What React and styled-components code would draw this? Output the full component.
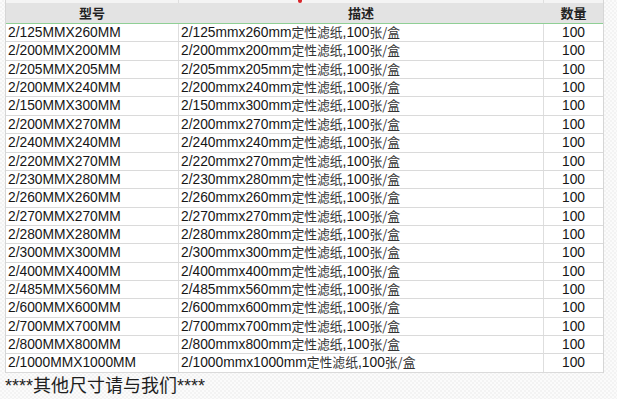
import React from 'react';
import styled, { createGlobalStyle } from 'styled-components';

const GlobalStyle = createGlobalStyle`
  html, body {
    margin: 0;
    padding: 0;
  }
  body {
    width: 617px;
    height: 399px;
    overflow: hidden;
    background-color: #ffffff;
    background-image: repeating-conic-gradient(#f3f3f3 0% 25%, #fbfbfb 0% 50%);
    background-size: 4px 4px;
    font-family: "Liberation Sans", Arial, "Noto Sans CJK SC", sans-serif;
    color: #1e1e1e;
  }
`;

const Page = styled.div`
  display: flex;
  flex-direction: column;
  width: 617px;
  height: 399px;
`;

const Sheet = styled.div`
  margin-left: 5px;
  width: 599px;
  background: #fff;
  border-left: 1px solid #d6d6d6;
  border-right: 1px solid #d6d6d6;
  box-sizing: border-box;
`;

const TopStrip = styled.div`
  position: relative;
  height: 3px;
  display: grid;
  grid-template-columns: 173px 365px 1fr;
  background: #f4f4f4;
`;

const RedMark = styled.span`
  position: absolute;
  left: 292px;
  top: 0;
  width: 4px;
  height: 3px;
  background: #d9262b;
  border-radius: 0 0 2px 2px;
`;

const Row = styled.div`
  display: grid;
  grid-template-columns: 173px 365px 1fr;
  height: ${p => (p.$head ? '21px' : '18.37px')};
  box-sizing: border-box;
  background: ${p => (p.$head ? '#e3e3e3' : '#fff')};
  border-bottom: 1px solid ${p => (p.$head ? '#8fcf95' : '#dadada')};
`;

const Cell = styled.div`
  display: block;
  text-align: ${p => (p.$center ? 'center' : 'left')};
  padding: ${p => (p.$center ? '0' : '0 0 0 2px')};
  font-size: 13.8px;
  line-height: ${p => (p.$head ? '20px' : '17.4px')};
  color: #161616;
  white-space: nowrap;
  min-width: 0;
  border-right: ${p => (p.$last ? 'none' : '1px solid #dedede')};
`;

const HeadCell = styled(Cell)`
  font-family: "Noto Sans CJK SC", sans-serif;
  font-weight: 700;
  font-size: 13px;
  color: #222;
  border-right-color: #e3e3e3;
`;

const Desc = styled.span`
  font-family: "Noto Sans CJK SC", sans-serif;
  font-size: 12.8px;
  line-height: 1;
  color: #333;
`;

const Note = styled.div`
  margin: 2px 0 0 5px;
  font-size: 18px;
  line-height: 22px;
  font-family: "Liberation Sans", "Noto Sans CJK SC", sans-serif;
  color: #1e1e1e;
`;

const sizes = [
  [125, 260], [200, 200], [205, 205], [200, 240], [150, 300], [200, 270],
  [240, 240], [220, 270], [230, 280], [260, 260], [270, 270], [280, 280],
  [300, 300], [400, 400], [485, 560], [600, 600], [700, 700], [800, 800],
  [1000, 1000],
];

export default function App() {
  return (
    <Page>
      <GlobalStyle />
      <Sheet>
        <TopStrip>
          <Cell />
          <Cell />
          <Cell $last />
          <RedMark />
        </TopStrip>
        <Row $head>
          <HeadCell $center $head>型号</HeadCell>
          <HeadCell $center $head>描述</HeadCell>
          <HeadCell $center $head $last>数量</HeadCell>
        </Row>
        {sizes.map(([a, b]) => (
          <Row key={`${a}-${b}`}>
            <Cell>{`2/${a}MMX${b}MM`}</Cell>
            <Cell>
              {`2/${a}mmx${b}mm`}
              <Desc>定性滤纸</Desc>,100<Desc>张/盒</Desc>
            </Cell>
            <Cell $center $last>100</Cell>
          </Row>
        ))}
      </Sheet>
      <Note>****其他尺寸请与我们****</Note>
    </Page>
  );
}
